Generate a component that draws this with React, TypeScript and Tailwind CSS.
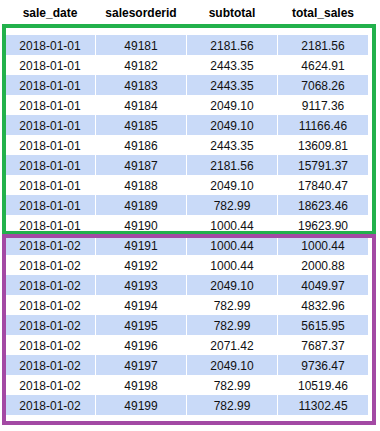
const rows = [
  ["2018-01-01", "49181", "2181.56", "2181.56"],
  ["2018-01-01", "49182", "2443.35", "4624.91"],
  ["2018-01-01", "49183", "2443.35", "7068.26"],
  ["2018-01-01", "49184", "2049.10", "9117.36"],
  ["2018-01-01", "49185", "2049.10", "11166.46"],
  ["2018-01-01", "49186", "2443.35", "13609.81"],
  ["2018-01-01", "49187", "2181.56", "15791.37"],
  ["2018-01-01", "49188", "2049.10", "17840.47"],
  ["2018-01-01", "49189", "782.99", "18623.46"],
  ["2018-01-01", "49190", "1000.44", "19623.90"],
  ["2018-01-02", "49191", "1000.44", "1000.44"],
  ["2018-01-02", "49192", "1000.44", "2000.88"],
  ["2018-01-02", "49193", "2049.10", "4049.97"],
  ["2018-01-02", "49194", "782.99", "4832.96"],
  ["2018-01-02", "49195", "782.99", "5615.95"],
  ["2018-01-02", "49196", "2071.42", "7687.37"],
  ["2018-01-02", "49197", "2049.10", "9736.47"],
  ["2018-01-02", "49198", "782.99", "10519.46"],
  ["2018-01-02", "49199", "782.99", "11302.45"],
];

const headers = ["sale_date", "salesorderid", "subtotal", "total_sales"];

export default function App() {
  return (
    <div className="relative w-[380px] h-[431px] bg-white font-['Liberation_Sans',Arial,sans-serif] text-[12px] text-[#111]">
      <div className="pl-[5px]">
        <div className="grid grid-cols-[repeat(4,90px)] gap-x-px h-[25px] items-center font-bold text-black">
          {headers.map((h) => (
            <div key={h} className="text-center">
              {h}
            </div>
          ))}
        </div>
        <div className="h-[10px]" />
        {rows.map((r, i) => (
          <div key={i} className="grid grid-cols-[repeat(4,90px)] gap-x-px h-[20px]">
            {r.map((c, j) => (
              <div
                key={j}
                className={`flex items-center justify-center pt-px ${i % 2 === 0 ? "bg-[#c9daf8]" : "bg-white"}`}
              >
                {c}
              </div>
            ))}
          </div>
        ))}
      </div>

      {/* highlight boxes drawn over the table */}
      <div className="absolute left-[2px] top-[24px] w-[374px] h-[211px] border-4 border-[#22b14c]" />
      <div className="absolute left-[2px] top-[234px] w-[374px] h-[191px] border-4 border-[#a349a4]" />
    </div>
  );
}
